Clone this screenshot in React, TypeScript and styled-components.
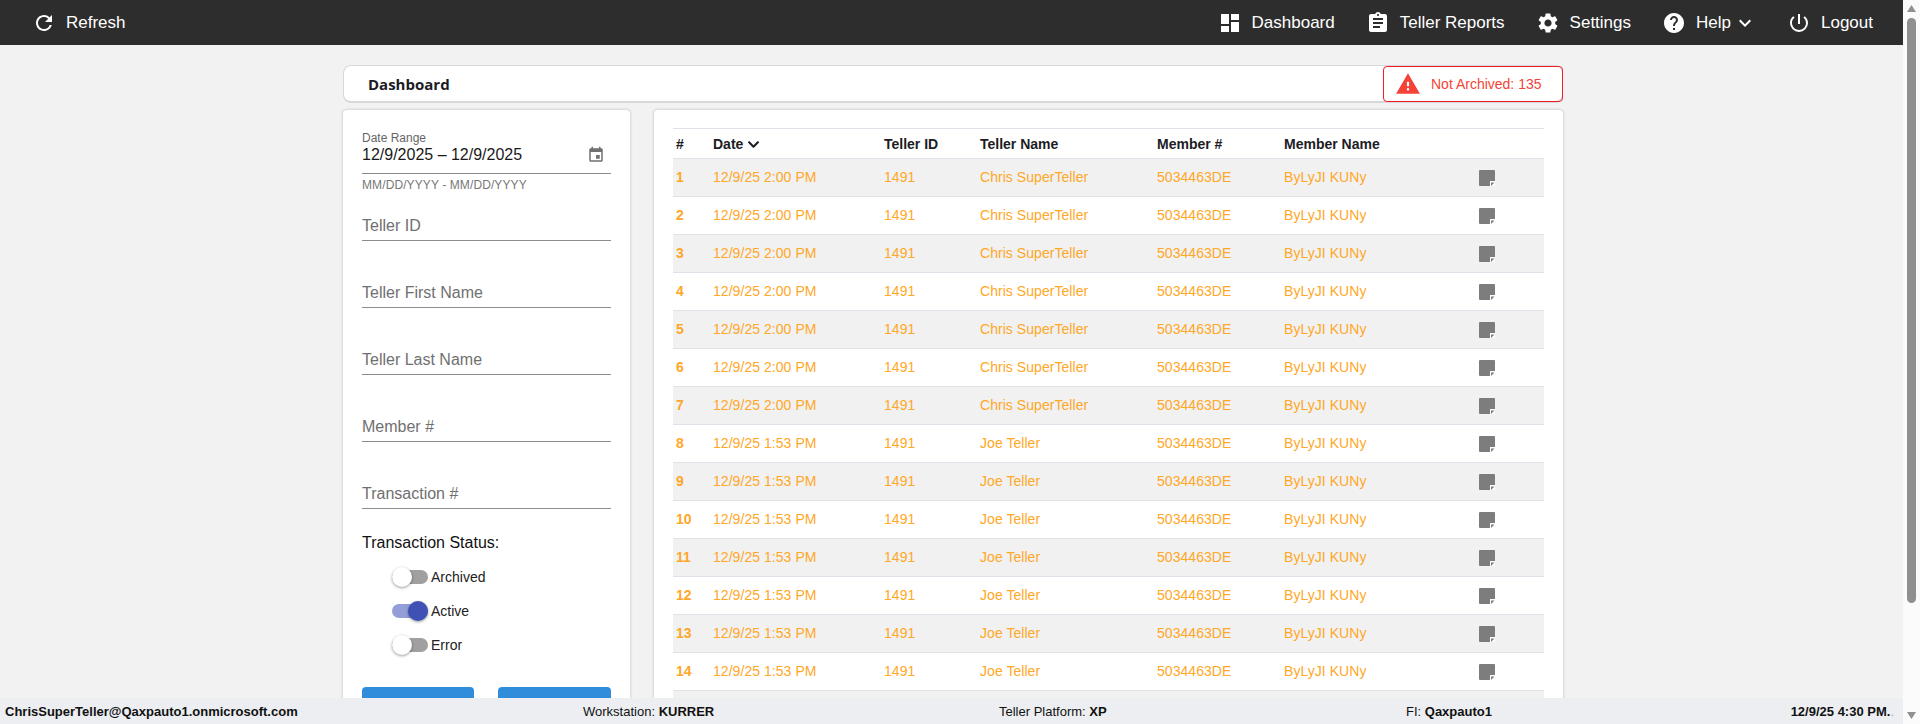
import React from "react";
import styled, { createGlobalStyle } from "styled-components";
import {
  MdRefresh,
  MdDashboard,
  MdAssignment,
  MdSettings,
  MdHelp,
  MdKeyboardArrowDown,
  MdPowerSettingsNew,
  MdWarning,
  MdEvent,
} from "react-icons/md";
import { FaChevronDown } from "react-icons/fa";

const GlobalStyle = createGlobalStyle`
  body {
    margin: 0;
    background: #f2f2f2;
    font-family: "Liberation Sans", Arial, sans-serif;
    color: #111;
  }
`;

const TopBar = styled.header`
  position: fixed;
  top: 0;
  left: 0;
  right: 17px;
  height: 45px;
  background: #2d2d2d;
  color: #fff;
  display: flex;
  align-items: center;
  justify-content: space-between;
  padding: 0 30px 0 32px;
  z-index: 5;
`;

const NavGroup = styled.nav`
  display: flex;
  align-items: center;
  gap: 31px;
`;

const NavItem = styled.div`
  display: flex;
  align-items: center;
  gap: 10px;
  font-size: 17px;
  white-space: nowrap;
  svg {
    width: 24px;
    height: 24px;
    flex: none;
  }
`;

const Caret = styled(MdKeyboardArrowDown)`
  margin-left: -8px;
  margin-right: -1px;
`;

const ScrollStrip = styled.div`
  position: fixed;
  top: 0;
  right: 0;
  bottom: 0;
  width: 17px;
  background: #fbfbfb;
  z-index: 6;
`;

const ScrollThumb = styled.div`
  position: absolute;
  top: 18px;
  left: 4px;
  width: 9px;
  height: 585px;
  border-radius: 5px;
  background: #8f8f8f;
`;

const ScrollArrow = styled.svg<{ $down?: boolean }>`
  position: absolute;
  left: 0;
  ${(p) => (p.$down ? "bottom: 0;" : "top: 0;")}
  width: 17px;
  height: 17px;
`;

const Page = styled.main`
  padding: 65px 357px 0 343px;
  height: 854px;
  box-sizing: border-box;
`;

const TitleCard = styled.div`
  height: 38px;
  box-sizing: border-box;
  background: #fff;
  border: 1px solid #d8d8d8;
  border-bottom-width: 2px;
  border-radius: 8px;
  display: flex;
  align-items: center;
  justify-content: space-between;
  padding-left: 24px;
`;

const PageTitle = styled.h1`
  margin: 0;
  font-family: "Open Sans", sans-serif;
  font-size: 15px;
  font-weight: 700;
  color: #1c1c24;
`;

const AlertBadge = styled.div`
  width: 180px;
  height: 36px;
  box-sizing: border-box;
  margin-right: -1px;
  border: 1px solid #f01c2c;
  border-radius: 4px;
  display: flex;
  align-items: center;
  gap: 10px;
  padding-left: 11px;
  font-size: 14px;
  color: #f44336;
  svg {
    width: 26px;
    height: 26px;
    color: #f44336;
  }
`;

const Columns = styled.div`
  display: grid;
  grid-template-columns: 287px 1fr;
  column-gap: 24px;
  margin-top: 7px;
`;

const Card = styled.section`
  background: #fff;
  border-radius: 4px;
  box-shadow: 0 0 3px rgba(0, 0, 0, 0.25);
  height: 716px;
  box-sizing: border-box;
`;

const FilterCard = styled(Card)`
  padding: 22px 19px 0;
`;

const DateField = styled.div`
  border-bottom: 1px solid #8c8c8c;
  height: 42px;
  box-sizing: border-box;
  position: relative;
`;

const SmallLabel = styled.div`
  font-size: 12px;
  line-height: 13px;
  color: #666;
`;

const DateValue = styled.div`
  font-size: 16px;
  line-height: 19px;
  color: #1a1a1a;
`;

const CalendarIcon = styled(MdEvent)`
  position: absolute;
  right: 6px;
  top: 14px;
  width: 18px;
  height: 18px;
  color: #707070;
`;

const HelperText = styled.div`
  font-size: 12px;
  line-height: 14px;
  margin-top: 4px;
  color: #777;
  letter-spacing: 0.1px;
`;

const FieldStack = styled.div`
  margin-top: 24px;
  display: flex;
  flex-direction: column;
  gap: 42px;
`;

const TextField = styled.div`
  height: 25px;
  box-sizing: border-box;
  border-bottom: 1px solid #8c8c8c;
  font-size: 16px;
  line-height: 19px;
  color: #707070;
`;

const StatusTitle = styled.div`
  margin-top: 24px;
  font-size: 16px;
  line-height: 19px;
  color: #111;
`;

const SwitchList = styled.div`
  margin-top: 15px;
  padding-left: 30px;
  display: flex;
  flex-direction: column;
  gap: 14px;
`;

const SwitchRow = styled.div`
  display: flex;
  align-items: center;
  gap: 3px;
  height: 20px;
  font-size: 14px;
  color: #222;
`;

const Track = styled.span<{ $on?: boolean }>`
  position: relative;
  width: 36px;
  height: 14px;
  border-radius: 7px;
  background: ${(p) => (p.$on ? "#949ed8" : "#a0a0a0")};
`;

const Thumb = styled.span<{ $on?: boolean }>`
  position: absolute;
  top: -3px;
  left: ${(p) => (p.$on ? "16px" : "0")};
  width: 20px;
  height: 20px;
  border-radius: 50%;
  background: ${(p) => (p.$on ? "#3f51b5" : "#fff")};
  box-shadow: 0 1px 3px rgba(0, 0, 0, 0.4);
`;

const ButtonRow = styled.div`
  margin-top: 32px;
  display: grid;
  grid-template-columns: 112px 113px;
  justify-content: space-between;
`;

const ActionButton = styled.div`
  height: 36px;
  border-radius: 4px;
  background: #2f8ddb;
`;

const TableCard = styled(Card)`
  padding: 18px 19px 0;
`;

const Table = styled.table`
  width: 100%;
  border-collapse: collapse;
  table-layout: fixed;
  font-size: 14px;
  border-top: 1px solid #e0e1e9;
`;

const HeadCell = styled.th`
  height: 29px;
  padding: 0 0 0 3px;
  text-align: left;
  font-size: 14px;
  font-weight: 700;
  color: #1c1c24;
  border-bottom: 1px solid #e0e1e9;
  svg {
    width: 13px;
    height: 13px;
    margin-left: 4px;
    vertical-align: -2px;
  }
`;

const Row = styled.tr`
  &:nth-child(odd) {
    background: #f1f1f2;
  }
`;

const Cell = styled.td<{ $bold?: boolean }>`
  height: 36px;
  padding: 0 0 1px 3px;
  font-weight: ${(p) => (p.$bold ? 700 : 400)};
  letter-spacing: ${(p) => (p.$bold ? 0 : "0.05px")};
  color: #ffa726;
  border-bottom: 1px solid #e0e1e9;
  white-space: nowrap;
`;

const NoteSvg = styled.svg`
  display: block;
  width: 16px;
  height: 16px;
  margin: 1px 0 0 -1px;
`;

const NoteIcon = () => (
  <NoteSvg viewBox="0 0 16 16">
    <rect x="11" y="11" width="5" height="5" fill="#fff" />
    <path
      d="M1 0h14a1 1 0 0 1 1 1v10h-5v5H1a1 1 0 0 1-1-1V1a1 1 0 0 1 1-1z"
      fill="#7d7d7d"
    />
    <path d="M12 12.5h3.5L12 16z" fill="#7d7d7d" />
  </NoteSvg>
);

const StatusBar = styled.footer`
  position: fixed;
  left: 0;
  right: 17px;
  bottom: 0;
  height: 26px;
  background: #eceef1;
  display: grid;
  grid-template-columns: 578px 416px 407px 1fr auto;
  align-items: center;
  padding: 0 9px 0 5px;
  font-size: 13px;
  color: #111;
  z-index: 5;
  b {
    font-weight: 700;
  }
`;

const FaintDot = styled.span`
  color: #aaa;
`;

const rows = Array.from({ length: 17 }, (_, i) => ({
  id: i + 1,
  date: i < 7 ? "12/9/25 2:00 PM" : "12/9/25 1:53 PM",
  tellerId: "1491",
  tellerName: i < 7 ? "Chris SuperTeller" : "Joe Teller",
  memberNo: "5034463DE",
  memberName: "ByLyJI KUNy",
}));

const App = () => {
  return (
    <>
      <GlobalStyle />
      <TopBar>
        <NavItem>
          <MdRefresh />
          Refresh
        </NavItem>
        <NavGroup>
          <NavItem>
            <MdDashboard />
            Dashboard
          </NavItem>
          <NavItem>
            <MdAssignment />
            Teller Reports
          </NavItem>
          <NavItem>
            <MdSettings />
            Settings
          </NavItem>
          <NavItem>
            <MdHelp />
            Help
            <Caret />
          </NavItem>
          <NavItem>
            <MdPowerSettingsNew />
            Logout
          </NavItem>
        </NavGroup>
      </TopBar>

      <ScrollStrip>
        <ScrollArrow viewBox="0 0 17 17">
          <path d="M8.5 5L13 12H4z" fill="#909090" />
        </ScrollArrow>
        <ScrollThumb />
        <ScrollArrow $down viewBox="0 0 17 17">
          <path d="M8.5 12L13 5H4z" fill="#909090" />
        </ScrollArrow>
      </ScrollStrip>

      <Page>
        <TitleCard>
          <PageTitle>Dashboard</PageTitle>
          <AlertBadge>
            <MdWarning />
            Not Archived: 135
          </AlertBadge>
        </TitleCard>

        <Columns>
          <FilterCard>
            <DateField>
              <SmallLabel>Date Range</SmallLabel>
              <DateValue>12/9/2025 – 12/9/2025</DateValue>
              <CalendarIcon />
            </DateField>
            <HelperText>MM/DD/YYYY - MM/DD/YYYY</HelperText>
            <FieldStack>
              <TextField>Teller ID</TextField>
              <TextField>Teller First Name</TextField>
              <TextField>Teller Last Name</TextField>
              <TextField>Member #</TextField>
              <TextField>Transaction #</TextField>
            </FieldStack>
            <StatusTitle>Transaction Status:</StatusTitle>
            <SwitchList>
              <SwitchRow>
                <Track>
                  <Thumb />
                </Track>
                Archived
              </SwitchRow>
              <SwitchRow>
                <Track $on>
                  <Thumb $on />
                </Track>
                Active
              </SwitchRow>
              <SwitchRow>
                <Track>
                  <Thumb />
                </Track>
                Error
              </SwitchRow>
            </SwitchList>
            <ButtonRow>
              <ActionButton />
              <ActionButton />
            </ButtonRow>
          </FilterCard>

          <TableCard>
            <Table>
              <colgroup>
                <col style={{ width: 37 }} />
                <col style={{ width: 171 }} />
                <col style={{ width: 96 }} />
                <col style={{ width: 177 }} />
                <col style={{ width: 127 }} />
                <col style={{ width: 196 }} />
                <col />
              </colgroup>
              <thead>
                <tr>
                  <HeadCell>#</HeadCell>
                  <HeadCell>
                    Date
                    <FaChevronDown />
                  </HeadCell>
                  <HeadCell>Teller ID</HeadCell>
                  <HeadCell>Teller Name</HeadCell>
                  <HeadCell>Member #</HeadCell>
                  <HeadCell>Member Name</HeadCell>
                  <HeadCell />
                </tr>
              </thead>
              <tbody>
                {rows.map((row) => (
                  <Row key={row.id}>
                    <Cell $bold>{row.id}</Cell>
                    <Cell>{row.date}</Cell>
                    <Cell>{row.tellerId}</Cell>
                    <Cell>{row.tellerName}</Cell>
                    <Cell>{row.memberNo}</Cell>
                    <Cell>{row.memberName}</Cell>
                    <Cell>
                      <NoteIcon />
                    </Cell>
                  </Row>
                ))}
              </tbody>
            </Table>
          </TableCard>
        </Columns>
      </Page>

      <StatusBar>
        <b>ChrisSuperTeller@Qaxpauto1.onmicrosoft.com</b>
        <div>
          Workstation: <b>KURRER</b>
        </div>
        <div>
          Teller Platform: <b>XP</b>
        </div>
        <div>
          FI: <b>Qaxpauto1</b>
        </div>
        <div>
          <b>12/9/25 4:30 PM.</b>
          <FaintDot>.</FaintDot>
        </div>
      </StatusBar>
    </>
  );
};

export default App;
